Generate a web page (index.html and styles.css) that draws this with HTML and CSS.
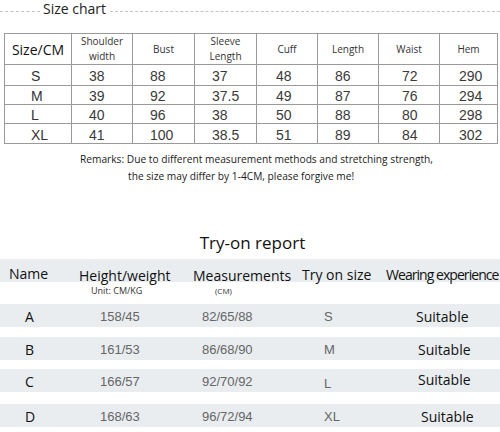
FILE: index.html
```html
<!DOCTYPE html>
<html>
<head>
<meta charset="utf-8">
<link rel="stylesheet" href="styles.css">
</head>
<body>
<div class="page">
  <div class="chart-title">
    <span class="dots dots-left"></span>
    <span class="chart-title-text">Size chart</span>
    <span class="dots dots-right"></span>
  </div>

  <table class="size-table">
    <colgroup>
      <col class="c1"><col class="c2"><col class="c3"><col class="c4"><col class="c5"><col class="c6"><col class="c7"><col class="c8">
    </colgroup>
    <thead>
      <tr class="head-row">
        <th class="size-head">Size/CM</th>
        <th>Shoulder<br>width</th>
        <th>Bust</th>
        <th>Sleeve<br>Length</th>
        <th>Cuff</th>
        <th>Length</th>
        <th>Waist</th>
        <th>Hem</th>
      </tr>
    </thead>
    <tbody>
      <tr class="r1"><td class="sz">S</td><td>38</td><td>88</td><td>37</td><td>48</td><td>86</td><td>72</td><td>290</td></tr>
      <tr class="r2"><td class="sz">M</td><td>39</td><td>92</td><td>37.5</td><td>49</td><td>87</td><td>76</td><td>294</td></tr>
      <tr class="r3"><td class="sz">L</td><td>40</td><td>96</td><td>38</td><td>50</td><td>88</td><td>80</td><td>298</td></tr>
      <tr class="r4"><td class="sz">XL</td><td>41</td><td>100</td><td>38.5</td><td>51</td><td>89</td><td>84</td><td>302</td></tr>
    </tbody>
  </table>

  <div class="remarks">
    <p class="remark-1">Remarks: Due to different measurement methods and stretching strength,</p>
    <p class="remark-2">the size may differ by 1-4CM, please forgive me!</p>
  </div>

  <h2 class="tryon-title">Try-on report</h2>

  <div class="tryon">
    <div class="tr-row tr-head">
      <div class="h-name">Name</div>
      <div class="h-hw">Height/weight</div>
      <div class="h-meas">Measurements</div>
      <div class="h-size">Try on size</div>
      <div class="h-exp">Wearing experience</div>
    </div>
    <div class="tr-units">
      <div></div>
      <div class="u-hw">Unit: CM/KG</div>
      <div class="u-meas">(CM)</div>
      <div></div>
      <div></div>
    </div>
    <div class="tr-row tr-data row-a">
      <div class="d-name">A</div>
      <div class="d-hw">158/45</div>
      <div class="d-meas">82/65/88</div>
      <div class="d-size">S</div>
      <div class="d-exp">Suitable</div>
    </div>
    <div class="tr-row tr-data row-b">
      <div class="d-name">B</div>
      <div class="d-hw">161/53</div>
      <div class="d-meas">86/68/90</div>
      <div class="d-size">M</div>
      <div class="d-exp">Suitable</div>
    </div>
    <div class="tr-row tr-data row-c">
      <div class="d-name">C</div>
      <div class="d-hw">166/57</div>
      <div class="d-meas">92/70/92</div>
      <div class="d-size">L</div>
      <div class="d-exp">Suitable</div>
    </div>
    <div class="tr-row tr-data row-d">
      <div class="d-name">D</div>
      <div class="d-hw">168/63</div>
      <div class="d-meas">96/72/94</div>
      <div class="d-size">XL</div>
      <div class="d-exp">Suitable</div>
    </div>
  </div>
</div>
</body>
</html>
```

FILE: styles.css
```css
* { box-sizing: border-box; }
html, body { margin: 0; padding: 0; background: #fff; }
body { width: 500px; height: 432px; overflow: hidden; font-family: "Open Sans", "Noto Sans", sans-serif; color: #1a1a1a; }
.page { width: 500px; }

.chart-title { display: flex; align-items: flex-start; height: 24px; }
.dots { height: 0; border-top: 1px dashed #c4c4c4; margin-top: 11px; }
.dots-left { width: 40px; }
.dots-right { flex: 1; }
.chart-title-text { font-size: 14px; line-height: 18px; margin: 0 4px 0 3px; color: #222; }

.size-table { border-collapse: collapse; margin: 9px 0 0 4px; width: 493px; table-layout: fixed; }
.size-table col.c1 { width: 67px; }
.size-table col.c2 { width: 61px; }
.size-table col.c3 { width: 62px; }
.size-table col.c4 { width: 62px; }
.size-table col.c5 { width: 61px; }
.size-table col.c6 { width: 61px; }
.size-table col.c7 { width: 61px; }
.size-table col.c8 { width: 58px; }
.size-table th, .size-table td { border: 1px solid #9a9a9a; padding: 0; }
.size-table th { font-weight: normal; font-size: 10px; line-height: 15px; color: #333; text-align: center; height: 28px; }
.size-table th.size-head { font-size: 14px; line-height: 16px; color: #111; padding-top: 2px; }
.size-table td { font-family: "Liberation Sans", Arial, sans-serif; font-size: 14px; color: #3a3a3a; text-align: left; padding-left: 17px; padding-top: 2px; line-height: 16px; }
.size-table td.sz { padding-left: 26px; color: #333; }
.size-table td:nth-child(5) { padding-left: 19px; }
.size-table td:nth-child(7) { padding-left: 23px; }
.size-table td:nth-child(8) { padding-left: 19px; }
.size-table .r1 td { height: 21px; }
.size-table .r2 td { height: 19px; }
.size-table .r3 td { height: 19px; }
.size-table .r4 td { height: 20px; }

.remarks { margin-top: 7px; font-size: 10.2px; line-height: 17px; color: #1a1a1a; }
.remarks p { margin: 0; white-space: nowrap; }
.remark-1 { padding-left: 80px; }
.remark-2 { padding-left: 128px; }

.tryon-title { margin: 48px 0 0; font-weight: normal; font-size: 17px; line-height: 20px; text-align: center; padding-left: 5px; color: #111; }

.tryon { margin-top: 6px; }
.tr-row, .tr-units { display: grid; grid-template-columns: 72px 114px 107px 87px 120px; }
.tr-row { background: #e9edf0; height: 23px; }
.tr-head { font-size: 14px; line-height: 18px; color: #111; white-space: nowrap; }
.tr-head > div { padding-top: 8px; }
.h-name { padding-left: 9px; position: relative; top: -2px; }
.h-hw { padding-left: 7px; }
.h-meas { padding-left: 7px; }
.h-size { padding-left: 9px; position: relative; top: -1px; }
.h-exp { padding-left: 6px; letter-spacing: -0.95px; position: relative; top: -1px; }

.tr-units { height: 22px; font-size: 9px; line-height: 10px; color: #333; }
.tr-units > div { padding-top: 4px; }
.u-hw { padding-left: 19px; }
.u-meas { padding-left: 29px; font-size: 8px; }

.tr-data { margin-bottom: 10px; }
.tr-data > div { padding-top: 5px; line-height: 16px; }
.d-name { padding-left: 25px; font-size: 14px; color: #111; }
.d-hw, .d-meas, .d-size { font-family: "Liberation Sans", Arial, sans-serif; font-size: 13px; color: #666; }
.d-hw { padding-left: 28px; }
.d-meas { padding-left: 16px; }
.d-size { padding-left: 31px; }
.d-exp { padding-left: 36px; font-size: 14px; color: #111; }
.row-b .d-exp, .row-c .d-exp { padding-left: 38px; }
.row-d .d-exp { padding-left: 41px; }
.row-b { margin-bottom: 9px; }
.row-c { margin-bottom: 12px; }
.row-c .d-exp { padding-top: 3px; }
.row-c .d-size { padding-top: 7px; }
```
